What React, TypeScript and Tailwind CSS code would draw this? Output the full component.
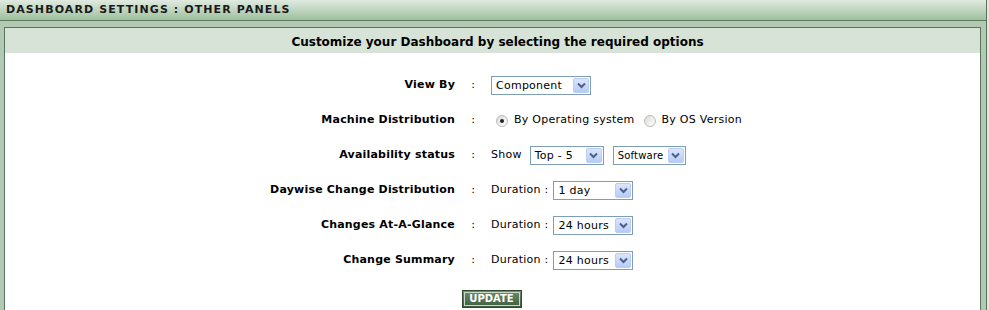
import React from "react";

const font = { fontFamily: '"DejaVu Sans", Verdana, sans-serif' };

function Arrow() {
  return (
    <div className="w-[16px] h-[15px] mr-[1px] rounded-[2px] bg-gradient-to-b from-[#dbe6fd] to-[#b6cbf7] border border-[#b9cdf5] flex items-center justify-center">
      <svg width="9" height="7" viewBox="0 0 9 7">
        <path d="M1 1.5 L4.5 5 L8 1.5" fill="none" stroke="#4d6185" strokeWidth="2" />
      </svg>
    </div>
  );
}

function Select({ label, width, small }: { label: string; width: string; small?: boolean }) {
  return (
    <div className={`${width} h-[19px] border border-[#7f9db9] bg-white flex items-center justify-between`}>
      <span className={`pl-[4px] ${small ? "text-[10px] tracking-[0.2px]" : "text-[11px] tracking-[0.25px]"} text-black leading-none`}>{label}</span>
      <Arrow />
    </div>
  );
}

function Radio({ checked }: { checked?: boolean }) {
  return (
    <div className="w-[12px] h-[12px] rounded-full border border-[#b8bcc0] bg-gradient-to-br from-[#dcdcd4] to-white flex items-center justify-center">
      {checked && <div className="w-[4px] h-[4px] rounded-full bg-[#222]" />}
    </div>
  );
}

function Row({ label, children }: { label: string; children: React.ReactNode }) {
  return (
    <div className="flex h-[35px] items-center">
      <div className="w-[450px] text-right text-[11px] font-bold tracking-[0.2px] text-black">{label}</div>
      <div className="w-[36px] text-center text-[11px] text-black">:</div>
      <div className="flex items-center text-[11px] tracking-[0.25px] text-black">{children}</div>
    </div>
  );
}

export default function App() {
  return (
    <div className="w-[989px] h-[310px] overflow-hidden bg-[#dfe9df]" style={font}>
      <div className="w-[987px] border-r border-[#56755a]">
        <div className="h-[21px] bg-gradient-to-b from-[#e0eae0] to-[#9fc09f] border-b border-[#5b7b5b] flex items-center pl-[6px]">
          <span className="text-[11px] font-bold tracking-[1.1px] text-[#1a1a1a]">
            DASHBOARD SETTINGS : OTHER PANELS
          </span>
        </div>
        <div className="bg-[#b4c9b4] pl-[4px] pr-[5px] pt-[6px] h-[300px]">
          <div className="border border-[#56755a] bg-white h-[320px]">
            <div className="h-[25px] bg-[#d7e3d7] flex items-center justify-center pt-[3px] pl-[10px] text-[12px] font-bold text-black">
              Customize your Dashboard by selecting the required options
            </div>
            <div className="pt-[15px]">
              <Row label="View By">
                <Select label="Component" width="w-[100px]" />
              </Row>
              <Row label="Machine Distribution">
                <div className="ml-[5px] mr-[6px]"><Radio checked /></div>
                <span>By Operating system</span>
                <div className="ml-[9px] mr-[6px]"><Radio /></div>
                <span>By OS Version</span>
              </Row>
              <Row label="Availability status">
                <span className="mr-[8px]">Show</span>
                <Select label="Top - 5" width="w-[74px]" />
                <div className="w-[9px]" />
                <Select label="Software" width="w-[73px]" small />
              </Row>
              <Row label="Daywise Change Distribution">
                <span className="mr-[5px]">Duration :</span>
                <Select label="1 day" width="w-[80px]" />
              </Row>
              <Row label="Changes At-A-Glance">
                <span className="mr-[5px]">Duration :</span>
                <Select label="24 hours" width="w-[80px]" />
              </Row>
              <Row label="Change Summary">
                <span className="mr-[5px]">Duration :</span>
                <Select label="24 hours" width="w-[80px]" />
              </Row>
              <div className="flex justify-center mt-[12px] pr-[2px]">
                <div className="w-[60px] h-[18px] bg-gradient-to-b from-[#6e8c6e] to-[#3f5e3f] border border-[#2f4a2f] p-[1px]">
                  <div className="w-full h-full border border-[#c8d8c8] flex items-center justify-center text-[10px] font-bold text-white leading-none">
                    UPDATE
                  </div>
                </div>
              </div>
            </div>
          </div>
        </div>
      </div>
    </div>
  );
}
